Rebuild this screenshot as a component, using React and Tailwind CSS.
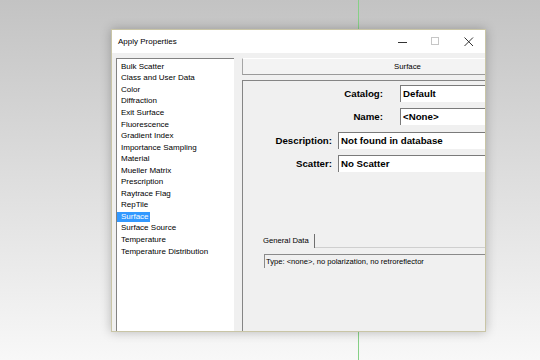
import React from "react";

const items = [
  "Bulk Scatter",
  "Class and User Data",
  "Color",
  "Diffraction",
  "Exit Surface",
  "Fluorescence",
  "Gradient Index",
  "Importance Sampling",
  "Material",
  "Mueller Matrix",
  "Prescription",
  "Raytrace Flag",
  "RepTile",
  "Surface",
  "Surface Source",
  "Temperature",
  "Temperature Distribution",
];

function Field({ label, value, labelW, gap }) {
  return (
    <div className="flex items-center">
      <div
        className={`${labelW} shrink-0 text-right text-[9.7px] font-bold leading-none`}
      >
        {label}
      </div>
      <div
        className={`${gap} flex h-[17px] flex-1 items-center border-t border-l border-t-[#7a7a7a] border-l-[#7a7a7a] bg-white pl-[2px] text-[9.7px] font-bold leading-none`}
      >
        {value}
      </div>
    </div>
  );
}

export default function App() {
  return (
    <div
      className="relative h-[360px] w-[540px] overflow-hidden bg-gradient-to-b from-[#c3c3c3] via-[#dedede] to-[#f8f8f8] text-black"
      style={{ fontFamily: '"Liberation Sans", Arial, sans-serif' }}
    >
      {/* viewport axis line */}
      <div className="absolute left-[358px] top-0 h-full w-px bg-[#86d086]" />

      {/* dialog window */}
      <div className="absolute left-[111px] top-[29px] flex h-[303px] w-[375px] flex-col overflow-hidden border border-[#c9c5a6] shadow-[0_0_10px_rgba(0,0,0,0.25)]">
        {/* Title bar */}
        <div className="flex h-[23px] shrink-0 items-center bg-white">
          <span className="ml-[6px] flex-1 text-[8px]">Apply Properties</span>
          <div className="flex h-full w-[33px] items-center justify-center">
            <svg width="10" height="10" viewBox="0 0 10 10">
              <path d="M0 5.5h9" stroke="#333" strokeWidth="1" />
            </svg>
          </div>
          <div className="flex h-full w-[33px] items-center justify-center">
            <svg width="9" height="9" viewBox="0 0 9 9">
              <rect x="0.5" y="0.5" width="7" height="7" fill="none" stroke="#c6c6c6" strokeWidth="1" />
            </svg>
          </div>
          <div className="flex h-full w-[33px] items-center justify-center">
            <svg width="10" height="10" viewBox="0 0 10 10">
              <path d="M0.5 0.5l8.5 8.5M9 0.5L0.5 9" stroke="#333" strokeWidth="1" />
            </svg>
          </div>
        </div>

        {/* Body */}
        <div className="flex flex-1 bg-[#f0f0f0] pl-[4px] pt-[5px]">
          {/* property list */}
          <div className="w-[118px] shrink-0 border-t border-l border-[#828282] bg-white pt-[2px] text-[8px]">
            {items.map((it) => (
              <div key={it} className="flex h-[11.56px] items-center">
                <span
                  className={`inline-flex h-[10px] items-center pl-[4px] pr-[1px] ${
                    it === "Surface" ? "bg-[#3399ff] text-white" : ""
                  }`}
                >
                  {it}
                </span>
              </div>
            ))}
          </div>

          {/* right side */}
          <div className="ml-[8px] flex w-[330px] shrink-0 flex-col">
            <div className="flex h-[17px] shrink-0 items-center justify-center border-t border-l border-b border-t-white border-l-[#a5a5a5] border-b-[#9a9a9a] bg-[#f3f3f3] text-[7.8px]">
              Surface
            </div>

            <div className="mt-[5px] flex flex-1 flex-col border-t border-l border-[#858585]">
              <div className="mt-[4px]">
                <Field label="Catalog:" value="Default" labelW="w-[140px]" gap="ml-[17px]" />
              </div>
              <div className="mt-[6px]">
                <Field label="Name:" value="<None>" labelW="w-[140px]" gap="ml-[17px]" />
              </div>
              <div className="mt-[7px]">
                <Field label="Description:" value="Not found in database" labelW="w-[89px]" gap="ml-[6px]" />
              </div>
              <div className="mt-[6px]">
                <Field label="Scatter:" value="No Scatter" labelW="w-[89px]" gap="ml-[6px]" />
              </div>

              {/* tab strip */}
              <div className="ml-[20px] mt-[62px] flex h-[14px] items-stretch">
                <div className="flex items-center border-r border-[#6f6f6f] pr-[5px] text-[7.7px]">
                  General Data
                </div>
                <div className="flex-1 border-b border-[#cfcfcf]" />
              </div>

              <div className="ml-[21px] mt-[6px] flex h-[14px] items-center border-t border-l border-[#8a8a8a] pl-[1px] text-[7.6px]">
                Type: &lt;none&gt;, no polarization, no retroreflector
              </div>
            </div>
          </div>
        </div>
      </div>
    </div>
  );
}
